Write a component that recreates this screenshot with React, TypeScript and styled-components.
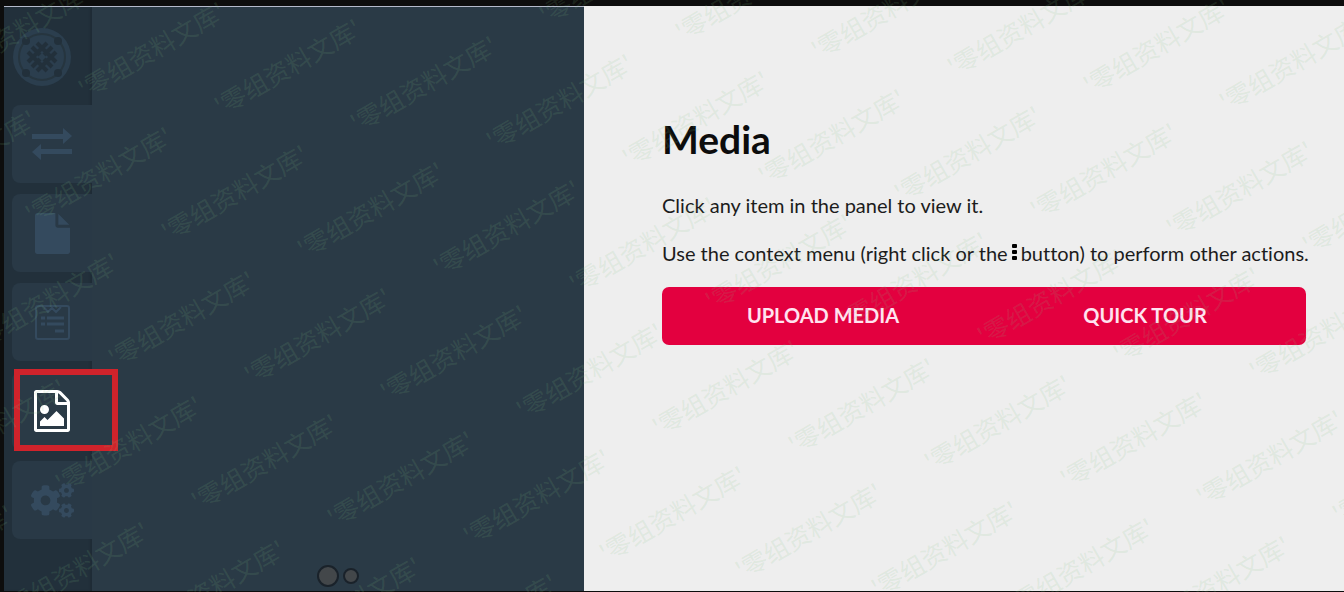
import React from "react";
import styled, { createGlobalStyle } from "styled-components";
import { FaCogs } from "react-icons/fa";

const GlobalStyle = createGlobalStyle`
  *, *::before, *::after { box-sizing: border-box; }
  body { margin: 0; background: #0d0d0d; }
`;

const Page = styled.div`
  position: relative;
  display: flex;
  min-height: 100vh;
  padding: 6px 0 1px 4px;
  overflow: hidden;
  background: #0d0d0d;
  color: #1c1c1c;
  font-family: Lato, "Noto Sans", "Noto Sans CJK SC", sans-serif;
  font-variant-ligatures: none;
`;

const Shell = styled.div`
  flex: 1;
  display: grid;
  grid-template-columns: 88px minmax(0, 492fr) minmax(0, 760fr);
`;

const Sidebar = styled.nav`
  display: flex;
  flex-direction: column;
  align-items: flex-end;
  gap: 11px;
  padding-top: 20px;
  border-top: 1px solid #b4bacb;
  background: #22303b;
  box-shadow: inset -2px 0 2px #1f2c36;
`;

const Brand = styled.a`
  display: flex;
  align-self: flex-start;
  height: 67px;
  padding-left: 8px;
  color: #2b3e4e;
`;

const TabSlot = styled.div`
  position: relative;
  width: 80px;
  height: 78px;
`;

const Tab = styled.button<{ $active?: boolean }>`
  display: flex;
  align-items: center;
  justify-content: center;
  width: 100%;
  height: 100%;
  padding: 0;
  border: 0;
  border-radius: 8px 0 0 8px;
  background: ${(p) => (p.$active ? "#2a3a46" : "#293946")};
  color: ${(p) => (p.$active ? "#fff" : "#344a5e")};
  cursor: pointer;
`;

const Highlight = styled.span`
  position: absolute;
  top: -3px;
  left: 2px;
  width: 104px;
  height: 82px;
  border: 6px solid #d0232b;
  pointer-events: none;
`;

const Panel = styled.section`
  display: flex;
  align-items: flex-end;
  justify-content: center;
  padding-bottom: 4px;
  border-top: 1px solid #b4bacb;
  background: #2a3a46;
`;

const Pager = styled.div`
  display: flex;
  align-items: center;
  gap: 4px;
`;

const Dot = styled.span<{ $size: number }>`
  width: ${(p) => p.$size}px;
  height: ${(p) => p.$size}px;
  border: 2px solid #1a222a;
  border-radius: 50%;
  background: #43474a;
`;

const Main = styled.main`
  padding: 109px 38px 40px 78px;
  background: #eee;
`;

const Title = styled.h1`
  margin: 0 0 28px;
  font-size: 39px;
  line-height: 48px;
  font-weight: 700;
  color: #0c0c0c;
`;

const Text = styled.p`
  margin: 0 0 20px;
  font-size: 20px;
  line-height: 28px;
  white-space: nowrap;
`;

const MoreIcon = styled.svg`
  margin: 0 4px 0 3px;
`;

const Actions = styled.div`
  display: grid;
  grid-template-columns: 1fr 1fr;
  height: 58px;
  overflow: hidden;
  border-radius: 7px;
  background: #e3003f;
`;

const Action = styled.button`
  padding: 0 0 2px;
  border: 0;
  background: transparent;
  color: #ffe3f0;
  font: inherit;
  font-size: 20px;
  font-weight: 700;
  cursor: pointer;
`;

const Watermarks = styled.div`
  position: absolute;
  inset: 0;
  overflow: hidden;
  pointer-events: none;
`;

const Mark = styled.span`
  position: absolute;
  color: rgba(128, 192, 132, 0.14);
  font-family: "Noto Sans CJK SC", sans-serif;
  font-size: 25px;
  line-height: 30px;
  white-space: nowrap;
  transform: rotate(-30deg);
  transform-origin: 0 50%;
`;

const Logo = () => (
  <svg width="60" height="60" viewBox="0 0 60 60" fill="none" stroke="currentColor">
    <circle cx="30" cy="30" r="29" fill="currentColor" stroke="none" />
    <circle cx="30" cy="30" r="23" stroke="#26353f" strokeWidth="2" />
    <g fill="#22303b" stroke="none">
      <circle cx="14" cy="14" r="4" />
      <circle cx="46" cy="14" r="4" />
      <circle cx="14" cy="46" r="4" />
      <circle cx="46" cy="46" r="4" />
    </g>
    <path
      d="M16 25 35 44M25 16 44 35M16 35 35 16M25 44 44 25M20 20 40 40M20 40 40 20"
      stroke="#22303b"
      strokeWidth="4"
    />
    <path d="m30 26 4 4-4 4-4-4z" fill="currentColor" stroke="none" />
  </svg>
);

const SwapIcon = () => (
  <svg width="42" height="32" viewBox="0 0 42 32" fill="currentColor">
    <path d="M1 6h31V0l9 8-9 8v-5H1zM41 21H10v-5l-9 8 9 8v-6h31z" />
  </svg>
);

const FileIcon = () => (
  <svg width="35" height="41" viewBox="0 0 1536 1792" fill="currentColor">
    <path d="M1024 512v-472q22 14 36 28l408 408q14 14 28 36h-472zm-128 32q0 40 28 68t68 28h544v1056q0 40-28 68t-68 28h-1344q-40 0-68-28t-28-68v-1600q0-40 28-68t68-28h800v544z" />
  </svg>
);

const FormIcon = () => (
  <svg width="35" height="35" viewBox="0 0 35 35" fill="none" stroke="currentColor" strokeWidth="2">
    <rect x="1" y="1" width="33" height="33" rx="2" />
    <path d="m9 2 4 5 4-4 4 4 5-5" />
    <path d="M6 13h4M12 13h17M6 19h4M12 19h17M20 26h9" strokeWidth="3" />
  </svg>
);

const ImageFileIcon = () => (
  <svg width="36" height="42" viewBox="0 0 1536 1792" fill="currentColor">
    <path d="M1468 380q28 28 48 76t20 88v1152q0 40-28 68t-68 28h-1344q-40 0-68-28t-28-68v-1600q0-40 28-68t68-28h896q40 0 88 20t76 48zm-444-244v376h376q-10-29-22-41l-313-313q-12-12-41-22zm384 1528v-1024h-416q-40 0-68-28t-28-68v-416h-768v1536h1280zm-128-448v320h-1024v-192l192-192 128 128 384-384zm-832-192q-80 0-136-56t-56-136 56-136 136-56 136 56 56 136-56 136-136 56z" />
  </svg>
);

const tabs = [
  { label: "Redirects", icon: <SwapIcon /> },
  { label: "Pages", icon: <FileIcon /> },
  { label: "Forms", icon: <FormIcon /> },
  { label: "Media", icon: <ImageFileIcon />, active: true },
  { label: "Settings", icon: <FaCogs size={43} /> },
];

const marks: { left: number; top: number }[] = [];
for (let row = -2; row <= 4; row++) {
  for (let col = -3; col <= 11; col++) {
    const left = 216 + col * 136 - row * 53;
    const top = Math.round(92 + col * 17.4 + row * 125.8);
    if (left > -140 && left < 1344 && top > -12 && top < 650) marks.push({ left, top });
  }
}

export default function App() {
  return (
    <Page>
      <GlobalStyle />
      <Shell>
        <Sidebar aria-label="Sections">
          <Brand href="#" aria-label="Home">
            <Logo />
          </Brand>
          {tabs.map((tab) => (
            <TabSlot key={tab.label}>
              <Tab type="button" aria-label={tab.label} $active={tab.active}>
                {tab.icon}
              </Tab>
              {tab.active && <Highlight />}
            </TabSlot>
          ))}
        </Sidebar>
        <Panel aria-label="Media files">
          <Pager>
            <Dot $size={22} />
            <Dot $size={16} />
          </Pager>
        </Panel>
        <Main>
          <Title>Media</Title>
          <Text>Click any item in the panel to view it.</Text>
          <Text>
            Use the context menu (right click or the
            <MoreIcon width="6" height="18" viewBox="0 0 6 18" fill="#000" aria-label="more">
              <rect x="1" y="1" width="5" height="4" rx="1" />
              <rect x="1" y="7" width="5" height="4" rx="1" />
              <rect x="1" y="13" width="5" height="4" rx="1" />
            </MoreIcon>
            button) to perform other actions.
          </Text>
          <Actions>
            <Action type="button">UPLOAD MEDIA</Action>
            <Action type="button">QUICK TOUR</Action>
          </Actions>
        </Main>
      </Shell>
      <Watermarks aria-hidden="true">
        {marks.map((m) => (
          <Mark key={`${m.left}:${m.top}`} style={{ left: m.left, top: m.top }}>
            '零组资料文库'
          </Mark>
        ))}
      </Watermarks>
    </Page>
  );
}
